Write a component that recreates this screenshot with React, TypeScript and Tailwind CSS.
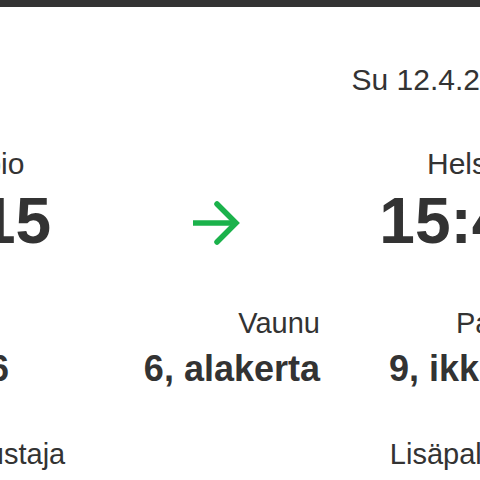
import React from 'react';

function GreenArrow() {
  return (
    <svg width="48" height="48" viewBox="0 0 48 48" fill="none" className="block">
      <path d="M0 24H43" stroke="#1bb24b" strokeWidth="5.5" />
      <path d="M24 5L43 24L24 43" stroke="#1bb24b" strokeWidth="5.5" strokeLinecap="round" />
    </svg>
  );
}

interface FieldProps {
  label: string;
  value: string;
  align?: 'left' | 'right';
}

function Field({ label, value, align = 'right' }: FieldProps) {
  return (
    <div className={align === 'right' ? 'text-right' : 'text-left'}>
      <div className="text-[29px] leading-none whitespace-nowrap">{label}</div>
      <div className="mt-[13px] text-[36px] leading-none font-bold whitespace-nowrap">{value}</div>
    </div>
  );
}

export default function App() {
  return (
    <div className="w-[480px] h-[480px] overflow-hidden bg-white text-[#333] font-['Liberation_Sans',Arial,sans-serif]">
      <div className="h-[7px] bg-[#333]" />

      <div className="-ml-[77px] w-[620px]">
        <div className="mt-[58px] pr-[13px] text-right text-[30px] leading-none whitespace-nowrap">
          Su 12.4.2025
        </div>

        <div className="mt-[54px] grid grid-cols-[174px_223px_223px]">
          <div className="text-left">
            <div className="pl-[8px] text-[30px] leading-none whitespace-nowrap">Kuopio</div>
            <div className="mt-[10px] text-[64px] leading-none font-bold whitespace-nowrap">9:15</div>
          </div>
          <div className="flex justify-center pt-[50px] pl-4">
            <GreenArrow />
          </div>
          <div className="text-right">
            <div className="pr-[11px] text-[30px] leading-none whitespace-nowrap">Helsinki</div>
            <div className="mt-[10px] text-[64px] leading-none font-bold whitespace-nowrap">15:45</div>
          </div>
        </div>

        <div className="mt-[56px] grid grid-cols-[174px_223px_223px]">
          <Field label="Juna" value="IC 66" align="left" />
          <Field label="Vaunu" value="6, alakerta" />
          <Field label="Paikka" value="9, ikkuna" />
        </div>

        <div className="mt-[53px] grid grid-cols-[174px_223px_223px]">
          <div className="pl-[2px]">
            <Field label="Matkustaja" value="Aikuinen" align="left" />
          </div>
          <div />
          <Field label="Lisäpalvelut" value="Ei valintaa" />
        </div>
      </div>
    </div>
  );
}
